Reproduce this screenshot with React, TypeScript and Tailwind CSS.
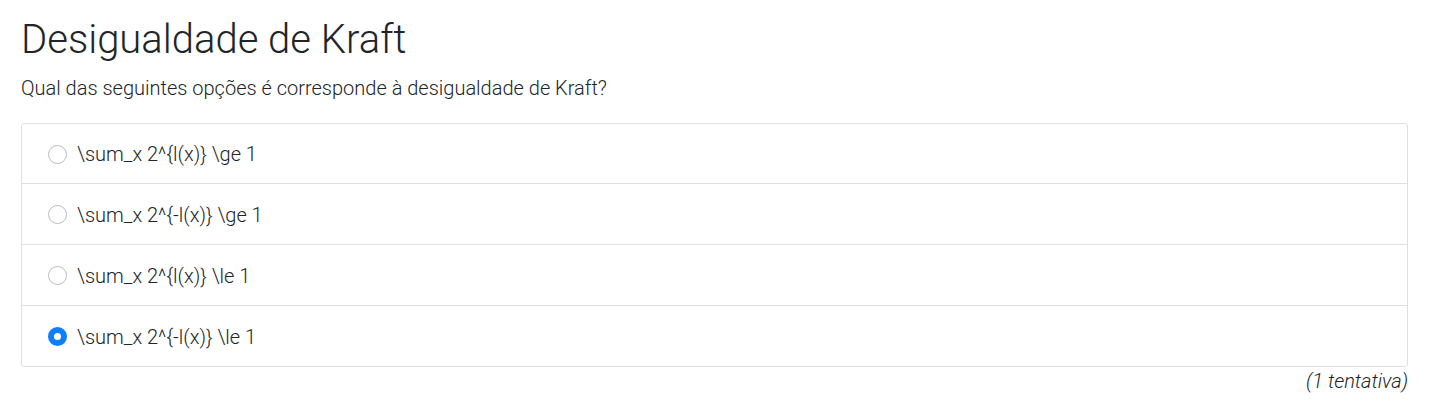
import React from "react";

const options = [
  "\\sum_x 2^{l(x)} \\ge 1",
  "\\sum_x 2^{-l(x)} \\ge 1",
  "\\sum_x 2^{l(x)} \\le 1",
  "\\sum_x 2^{-l(x)} \\le 1",
];

export default function App() {
  const selected = 3;
  return (
    <div
      className="bg-white w-[1442px] h-[415px] px-[21px] pt-[16px] text-[#212529]"
      style={{ fontFamily: "Roboto, 'Liberation Sans', sans-serif" }}
    >
      <h1 className="text-[40px] font-light leading-[48px]">Desigualdade de Kraft</h1>
      <p className="text-[20px] font-light leading-[30px] mt-[9px]">
        Qual das seguintes opções é corresponde à desigualdade de Kraft?
      </p>
      <div className="mt-[20px] w-[1387px] border border-[#dfdfdf] rounded-[3px]">
        {options.map((o, i) => (
          <div
            key={i}
            className={`flex items-center pl-[26px] pt-[1px] ${i > 0 ? "h-[61px] border-t border-[#dfdfdf]" : "h-[59px]"}`}
          >
            {i === selected ? (
              <span className="w-[19px] h-[19px] rounded-full border-[6px] border-[#0d7efc] bg-white shrink-0" />
            ) : (
              <span className="w-[19px] h-[19px] rounded-full border border-[#b8bcc2] bg-white shrink-0" />
            )}
            <span className="ml-[10px] text-[20px] font-light leading-[30px]">{o}</span>
          </div>
        ))}
      </div>
      <div className="w-[1387px] text-right text-[20px] font-light italic leading-[28px]">
        (1 tentativa)
      </div>
    </div>
  );
}
